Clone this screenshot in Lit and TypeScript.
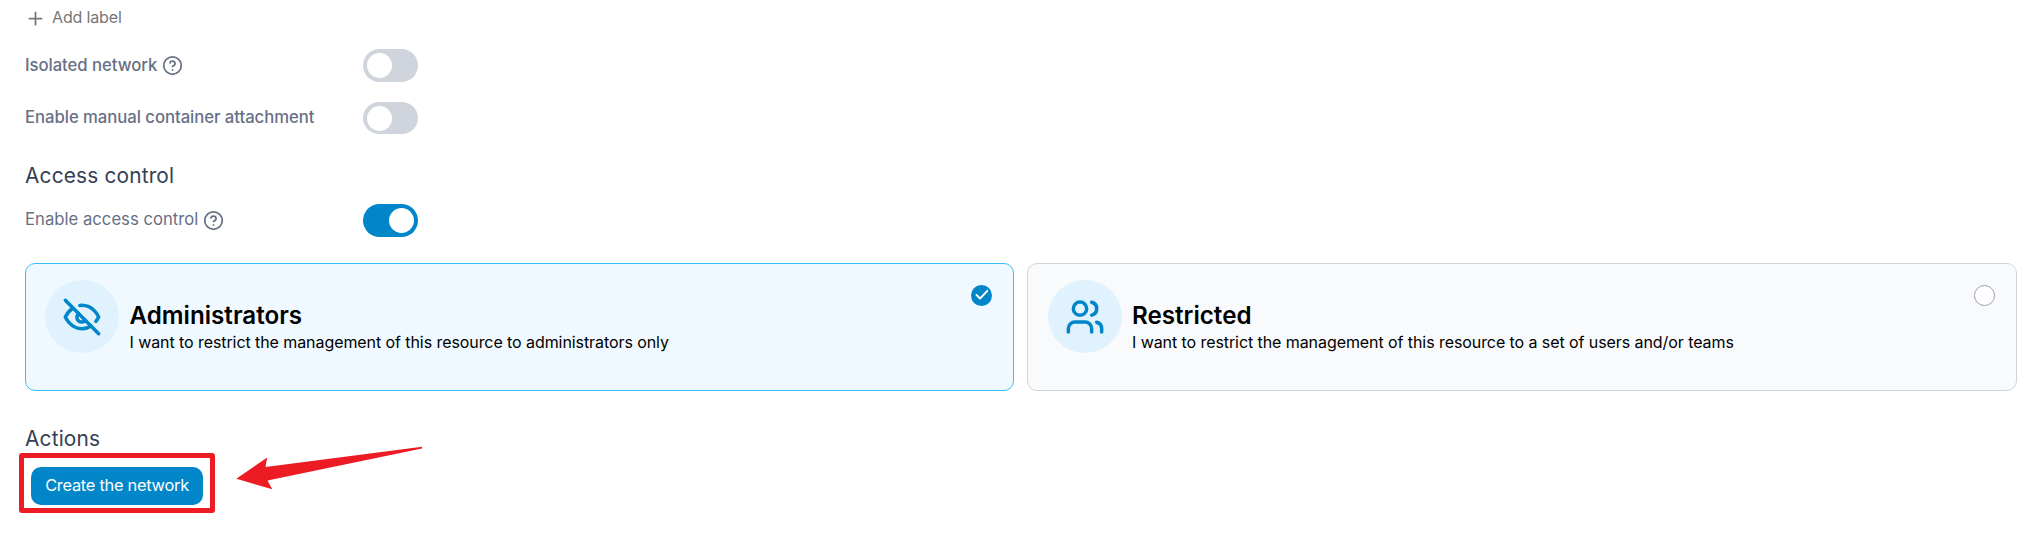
import { LitElement, html, css, svg } from "lit";
import { customElement, property } from "lit/decorators.js";
import { classMap } from "lit/directives/class-map.js";

const plus = svg`<path d="M12 5v14M5 12h14"/>`;
const help = svg`<circle cx="12" cy="12" r="10"/><path d="M9.09 9a3 3 0 0 1 5.83 1c0 2-3 3-3 3"/><path d="M12 17h.01"/>`;
const eyeOff = svg`<path d="M9.88 9.88a3 3 0 1 0 4.24 4.24"/><path d="M10.73 5.08A10.43 10.43 0 0 1 12 5c7 0 10 7 10 7a13.16 13.16 0 0 1-1.67 2.68"/><path d="M6.61 6.61A13.526 13.526 0 0 0 2 12s3 7 10 7a9.74 9.74 0 0 0 5.39-1.61"/><path d="M2 2l20 20"/>`;
const users = svg`<path d="M16 21v-2a4 4 0 0 0-4-4H6a4 4 0 0 0-4 4v2"/><circle cx="9" cy="7" r="4"/><path d="M22 21v-2a4 4 0 0 0-3-3.87"/><path d="M16 3.13a4 4 0 0 1 0 7.75"/>`;

@customElement("toggle-switch")
class ToggleSwitch extends LitElement {
  @property({ type: Boolean }) on = false;
  static styles = css`
    :host { display: block; height: 100%; }
    .track { box-sizing: border-box; display: flex; align-items: center; width: 55px; height: 100%; padding: 0 4px; border-radius: 17px; background: #d0d5dd; }
    .track.on { justify-content: flex-end; background: #0086c9; }
    .knob { width: 25px; height: 25px; border-radius: 50%; background: #fff; }
  `;
  render() {
    return html`<div class=${classMap({ track: true, on: this.on })}><div class="knob"></div></div>`;
  }
}

@customElement("option-card")
class OptionCard extends LitElement {
  @property({ type: Boolean }) selected = false;
  @property() heading = "";
  @property() description = "";
  @property({ attribute: false }) icon: unknown;
  static styles = css`
    :host { display: block; }
    .card { box-sizing: border-box; display: flex; height: 128px; padding: 16px 21px 0 20px; border: 1px solid #d0d5dd; border-radius: 10px; background: #f9fafb; color: #000; }
    .card.selected { padding-left: 19px; border-color: #36bffa; background: #f0f9ff; }
    .badge { display: flex; align-items: center; justify-content: center; width: 74px; height: 73px; border-radius: 50%; background: #e0f2fe; }
    .badge svg { width: 40px; height: 40px; fill: none; stroke: #0086c9; stroke-width: 2.1; stroke-linecap: round; stroke-linejoin: round; }
    .text { flex: 1; padding: 20px 0 0 10px; }
    .selected .text { padding-left: 10.5px; }
    .heading { font-size: 24.2px; line-height: 32px; font-weight: 600; }
    .description { font-size: 16px; line-height: 22px; margin-top: -1px; letter-spacing: -0.077px; }
    .radio { box-sizing: border-box; width: 21px; height: 21px; margin-top: 5px; border: 1px solid #98a2b3; border-radius: 50%; background: #fff; }
    .radio.selected { border: none; background: #0086c9; }
    .radio svg { display: block; width: 21px; height: 21px; fill: none; stroke: #fff; stroke-width: 1.9; stroke-linecap: round; stroke-linejoin: round; }
  `;
  render() {
    const selected = this.selected;
    return html`<div class=${classMap({ card: true, selected })}>
      <div class="badge"><svg viewBox="0 0 24 24">${this.icon}</svg></div>
      <div class="text">
        <div class="heading">${this.heading}</div>
        <div class="description">${this.description}</div>
      </div>
      <div class=${classMap({ radio: true, selected })}>
        ${selected ? html`<svg viewBox="0 0 21 21"><path d="M5.5 10l3.6 3.5 7.2-7.7"/></svg>` : ""}
      </div>
    </div>`;
  }
}

@customElement("app-root")
class AppRoot extends LitElement {
  static styles = css`
    :host { display: block; box-sizing: border-box; position: relative; height: 536px; padding: 4px 20px 0 25px; overflow: hidden; background: #fff; font-family: Inter, sans-serif; font-size: 16px; color: #667085; }
    .add { display: flex; align-items: center; height: 28px; gap: 6px; color: #767676; }
    .add svg { width: 21px; height: 21px; }
    .add-text { padding-bottom: 2px; letter-spacing: -0.15px; }
    svg { fill: none; stroke: currentColor; stroke-width: 2; stroke-linecap: round; stroke-linejoin: round; }
    .row { display: grid; grid-template-columns: 338px 55px; align-items: center; height: 33px; }
    .label { display: flex; align-items: center; gap: 5px; font-weight: 500; font-size: 16.7px; letter-spacing: -0.04px; }
    .label span { padding-bottom: 2px; }
    .label.regular { font-weight: 400; letter-spacing: 0; }
    .label.regular span { padding-bottom: 3px; }
    .label svg { width: 21px; height: 21px; }
    .isolated { margin-top: 17px; }
    .manual { height: 32px; margin-top: 20px; }
    .title { height: 28px; line-height: 28px; font-size: 20.8px; letter-spacing: 0.2px; color: #344054; }
    .access { margin-top: 28px; }
    .enable { margin-top: 14px; }
    .cards { display: grid; grid-template-columns: 989px 990px; gap: 13px; margin-top: 26px; }
    .actions { margin-top: 34px; }
    .frame { box-sizing: border-box; display: flex; width: 196px; height: 60px; margin: 0 0 0 -6px; padding: 9px 0 0 7px; border: 5px solid #ed1c24; border-radius: 3px; }
    button { display: block; width: 172px; height: 38px; padding: 0 0 2px; border: 0; border-radius: 10px; background: #0086c9; color: #fff; font: 400 16.4px Inter, sans-serif; letter-spacing: -0.27px; }
    .action-row { display: flex; }
    .arrow { position: absolute; left: 230px; top: 440px; width: 200px; height: 60px; fill: #ed1c24; stroke: none; }
  `;
  render() {
    return html`
      <div class="add"><svg viewBox="0 0 24 24">${plus}</svg><span class="add-text">Add label</span></div>
      <div class="row isolated"><div class="label"><span>Isolated network</span><svg viewBox="0 0 24 24">${help}</svg></div><toggle-switch></toggle-switch></div>
      <div class="row manual"><div class="label"><span>Enable manual container attachment</span></div><toggle-switch></toggle-switch></div>
      <div class="title access">Access control</div>
      <div class="row enable"><div class="label regular"><span>Enable access control</span><svg viewBox="0 0 24 24">${help}</svg></div><toggle-switch on></toggle-switch></div>
      <div class="cards">
        <option-card selected heading="Administrators" description="I want to restrict the management of this resource to administrators only" .icon=${eyeOff}></option-card>
        <option-card heading="Restricted" description="I want to restrict the management of this resource to a set of users and/or teams" .icon=${users}></option-card>
      </div>
      <div class="title actions">Actions</div>
      <div class="action-row"><div class="frame"><button>Create the network</button></div></div>
      <svg class="arrow" viewBox="0 0 200 60"><path d="M6.3 38.8L37.2 17.5L35.5 27L192 6.7V8.6L37.5 40.5L42.3 49.2Z"/></svg>
    `;
  }
}
